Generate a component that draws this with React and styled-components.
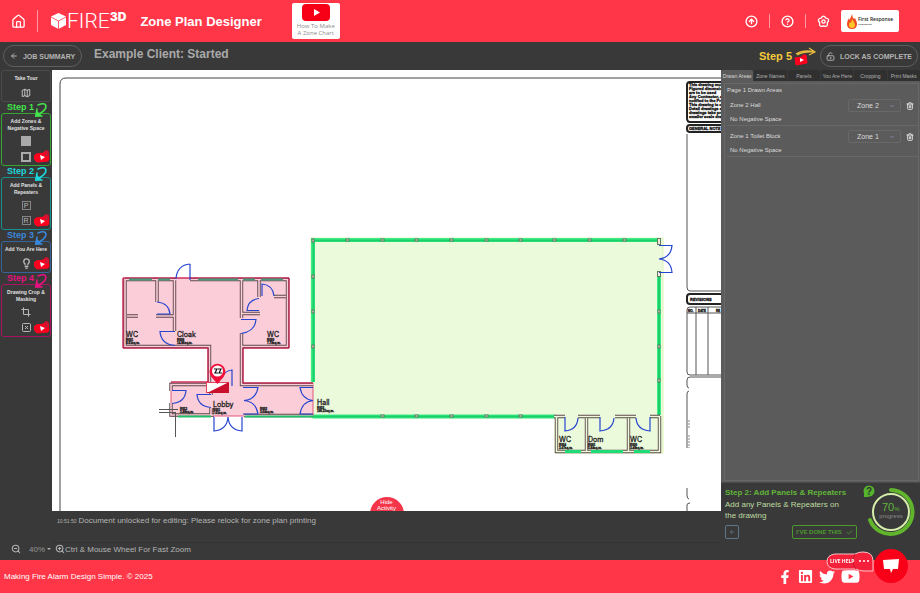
import React from "react";
import styled, { createGlobalStyle, css } from "styled-components";
import {
  House, CircleArrowUp, CircleHelp, ArrowLeft, Map as MapIcon, Crop, Check,
  ChevronDown, ZoomIn, ZoomOut, Lightbulb, Trash2, LockKeyholeOpen,
} from "lucide-react";
import { FaFacebookF, FaLinkedin, FaTwitter, FaYoutube } from "react-icons/fa";

const GlobalStyle = createGlobalStyle`
  *, *::before, *::after { box-sizing: border-box; }
  body { margin: 0; background: #393939; font-family: "Liberation Sans", Arial, sans-serif; }
  button, select { font: inherit; color: inherit; margin: 0; padding: 0; background: none; border: 0; cursor: pointer; }
  h1, h2, h3, p, ul { margin: 0; padding: 0; font-weight: inherit; font-size: inherit; }
  svg { display: block; flex: none; }
`;

const Page = styled.div`
  height: 100vh;
  display: flex;
  flex-direction: column;
  color: #b4b4b4;
`;

/* Header */
const Header = styled.header`
  flex: none;
  display: flex;
  align-items: center;
  height: 42px;
  padding: 0 21px 0 11px;
  background: #ff3648;
  color: #fff;
`;
const IconButton = styled.button`
  display: flex;
  align-items: center;
  justify-content: center;
`;
const Separator = styled.span`
  width: 1px;
  height: 14px;
  background: #ff9ba4;
`;
const BrandSeparator = styled(Separator)`
  height: 22px;
  margin-left: 11px;
`;
const Brand = styled.div`
  display: flex;
  align-items: center;
  margin-left: 12px;
  font: 300 21px/22px Roboto, sans-serif;
`;
const BrandSup = styled.span`
  align-self: flex-start;
  font: 900 12px/14px Inter, sans-serif;
`;
const AppTitle = styled.h1`
  margin-left: 14px;
  font-size: 13px;
  font-weight: 700;
`;
const HowTo = styled.button`
  display: flex;
  flex-direction: column;
  align-items: center;
  width: 48px;
  height: 36px;
  margin-left: 30px;
  padding-top: 1px;
  border-radius: 2px;
  background: #fff;
  color: #8b8b8b;
  font: 6px/7px "Open Sans", sans-serif;
  white-space: nowrap;
`;
const HeaderActions = styled.nav`
  display: flex;
  align-items: center;
  gap: 11px;
  margin-left: auto;
`;
const ClientLogo = styled.div`
  display: flex;
  align-items: center;
  justify-content: center;
  gap: 1px;
  width: 58px;
  height: 22px;
  border-radius: 2px;
  background: #fff;
  color: #222;
  font: 600 5px/7px "Open Sans", sans-serif;
  white-space: nowrap;
`;
const ClientTag = styled.span`
  display: block;
  font-size: 2px;
  line-height: 3px;
`;

/* Title bar */
const TitleBar = styled.div`
  flex: none;
  display: flex;
  align-items: center;
  height: 28px;
  padding: 0 2px 0 3px;
`;
const Pill = styled.button`
  display: flex;
  align-items: center;
  justify-content: center;
  gap: 5px;
  width: ${(p) => p.$width}px;
  height: 22px;
  border: 1px solid #5e5e5e;
  border-radius: 11px;
  color: #b4b4b4;
  font-size: 7px;
  font-weight: 700;
  white-space: nowrap;
`;
const JobTitle = styled.h2`
  margin-left: 12px;
  padding-bottom: 4px;
  font-size: 12px;
  font-weight: 700;
  color: #a9a9a9;
`;
const LockGroup = styled.div`
  display: flex;
  align-items: center;
  margin-left: auto;
`;
const StepFive = styled.div`
  display: flex;
  align-items: center;
  margin-right: 3px;
  color: #f4c93c;
  font-size: 11px;
  font-weight: 700;
`;

/* Work area */
const Work = styled.main`
  flex: 1;
  min-height: 0;
  display: grid;
  grid-template-columns: 52px minmax(0, 1fr) 199px;
  grid-template-rows: minmax(0, 1fr) 32px 17px;
  grid-template-areas: "tools canvas side" "tools log side" "zoom zoom side";
`;
const Tools = styled.nav`
  grid-area: tools;
  padding: 0 1px;
`;
const ToolBox = styled.section`
  display: flex;
  flex-direction: column;
  align-items: center;
  justify-content: space-between;
  height: ${(p) => p.$height}px;
  padding: 4px 0 2px;
  border: 1px solid ${(p) => p.$color};
  border-radius: 3px;
  color: #e0e0e0;
`;
const ToolTitle = styled.h3`
  font-size: 5px;
  line-height: 7px;
  font-weight: 700;
  text-align: center;
  white-space: nowrap;
`;
const ToolRow = styled.div`
  display: grid;
  grid-template-columns: 16px 16px 16px;
  justify-items: center;
  align-items: center;
  height: 13px;
  color: #b8b8b8;
`;
const ToolButton = styled(IconButton)`
  grid-column: 2;
`;
const Swatch = styled.span`
  width: 10px;
  height: 10px;
  ${(p) => (p.$filled ? css`background: #a9a9a9;` : css`border: 2px solid #a9a9a9;`)}
`;
const LetterBox = styled.span`
  width: 9px;
  height: 9px;
  border: 1px solid #858585;
  font-size: 7px;
  line-height: 7px;
  text-align: center;
`;
const StepLabel = styled.div`
  display: flex;
  align-items: center;
  gap: 1px;
  height: 11px;
  padding-left: 6px;
  color: ${(p) => p.$color};
  font-size: 9px;
  line-height: 11px;
  font-weight: 700;
  white-space: nowrap;
`;
const ArrowSvg = styled.svg`
  align-self: flex-start;
  overflow: visible;
`;

const Canvas = styled.section`
  grid-area: canvas;
  position: relative;
  overflow: hidden;
  background: #fff;
`;
const Plan = styled.svg`
  width: 100%;
  height: 100%;
`;
const HideActivity = styled.button`
  position: absolute;
  left: 50%;
  bottom: -20px;
  display: flex;
  justify-content: center;
  width: 34px;
  height: 34px;
  padding-top: 2px;
  transform: translateX(-50%);
  border-radius: 50%;
  background: #f5364a;
  color: #fff;
  font-size: 6px;
  line-height: 6px;
`;
const Log = styled.section`
  grid-area: log;
  display: flex;
  align-items: baseline;
  gap: 2px;
  padding: 5px 5px 0;
  border-bottom: 1px solid #333;
  font-size: 8px;
  line-height: 10px;
`;
const LogTime = styled.time`
  font-size: 5px;
`;
const ZoomBar = styled.div`
  grid-area: zoom;
  display: flex;
  align-items: center;
  padding: 0 11px 5px;
  font-size: 8px;
`;
const ZoomLevel = styled.button`
  display: flex;
  align-items: center;
  gap: 2px;
  margin: 0 4px 0 8px;
  color: #969696;
`;
const Caret = styled.span`
  border: 2px solid transparent;
  border-top-color: #b4b4b4;
  border-bottom: 0;
`;

/* Side panel */
const Side = styled.aside`
  grid-area: side;
  display: flex;
  flex-direction: column;
  min-height: 0;
`;
const Tabs = styled.div`
  display: grid;
  grid-template-columns: repeat(6, 1fr);
  gap: 1px;
  height: 11px;
`;
const Tab = styled.button`
  border-radius: 2px 2px 0 0;
  background: ${(p) => (p.$active ? "#5b5b5b" : "#303030")};
  color: ${(p) => (p.$active ? "#d8d8d8" : "#b0b0b0")};
  font-size: 5px;
  white-space: nowrap;
`;
const SideBody = styled.div`
  flex: 1;
  min-height: 0;
  padding: 2px 1px 1px 3px;
  background: #5b5b5b;
  color: #dcdcdc;
  font-size: 6px;
`;
const AreaBox = styled.section`
  height: 100%;
  border: 1px solid #686868;
  padding-left: 2px;
`;
const AreaTitle = styled.h3`
  padding-top: 1px;
  line-height: 10px;
`;
const AreaRow = styled.div`
  display: grid;
  grid-template-columns: 1fr 53px 17px;
  align-items: center;
  height: 31px;
  padding: 4px 0 0 3px;
  border-bottom: 1px solid #686868;
`;
const AreaName = styled.label`
  line-height: 13px;
`;
const SelectWrap = styled.span`
  display: grid;
  grid-template-columns: 1fr 11px;
  align-items: center;
  height: 13px;
  border: 1px solid #686868;
  border-radius: 2px;
`;
const ZoneSelect = styled.select`
  appearance: none;
  grid-area: 1 / 1 / 2 / 3;
  width: 100%;
  padding-left: 8px;
  font-size: 7px;
  line-height: 10px;
`;
const SelectIcon = styled(ChevronDown)`
  grid-area: 1 / 2;
  pointer-events: none;
  color: #8a93b4;
`;
const AreaNote = styled.p`
  grid-column: 1 / 4;
  line-height: 12px;
`;
const Guide = styled.section`
  flex: none;
  display: grid;
  grid-template-columns: 132px 1fr;
  gap: 3px;
  height: 78px;
  padding: 4px 4px 0 4px;
  border-top: 1px solid #4c4c4c;
  background: #393939;
`;
const GuideTitle = styled.h3`
  color: #62b53a;
  font-size: 8px;
  line-height: 12px;
  font-weight: 700;
  white-space: nowrap;
`;
const GuideText = styled.p`
  padding-right: 10px;
  color: #bddba0;
  font-size: 8px;
  line-height: 11px;
`;
const GuideButtons = styled.div`
  display: flex;
  justify-content: space-between;
  margin-top: 4px;
`;
const GuideButton = styled.button`
  display: flex;
  align-items: center;
  justify-content: center;
  gap: 4px;
  width: ${(p) => p.$width}px;
  height: 14px;
  border: 1px solid ${(p) => p.$color};
  border-radius: 2px;
  color: ${(p) => p.$color};
  font-size: 6px;
  font-weight: 700;
  white-space: nowrap;
`;
const ProgressArt = styled.svg`
  width: 60px;
  height: 60px;
  margin-top: -4px;
`;

/* Footer */
const Footer = styled.footer`
  flex: none;
  display: flex;
  align-items: center;
  justify-content: space-between;
  height: 33px;
  padding: 0 60px 0 4px;
  background: #ff3648;
  color: #fff;
  font-size: 8px;
`;
const Social = styled.nav`
  display: flex;
  align-items: center;
  gap: 6px;
`;
const SocialLink = styled.a`
  color: #fff;
`;
const Chat = styled.div`
  position: fixed;
  right: 12px;
  bottom: 10px;
  display: flex;
  align-items: flex-start;
`;
const LiveHelp = styled.button`
  display: flex;
  margin-top: 2px;
`;
const ChatButton = styled(IconButton)`
  width: 34px;
  height: 34px;
  border-radius: 50%;
  background: #f80018;
`;

function VideoBadge() {
  return (
    <svg width="16" height="13" viewBox="0 0 16 13" role="img" aria-label="Video">
      <path d="M2 4l8-1 1-2 3 0 1 8-1 2-11 1-2-2-1-4z" fill="#ff001f" strokeLinejoin="round" stroke="#ff001f" />
      <path d="M6 5l5 2-4 3z" fill="#fff" />
      <path d="M11 2q2-1 3 0l-1 1 1 1q-1 1-3 0M11 5l3 1" fill="none" stroke="#a72642" />
    </svg>
  );
}

function CurlArrow() {
  return (
    <ArrowSvg width="12" height="15" viewBox="0 0 12 15" fill="none" stroke="currentColor" strokeWidth="1.600" strokeLinecap="round" aria-hidden="true">
      <path d="M3 3q7-3 8 1 0 5-9 9M2 7l-1 7 6 0" />
      <path d="M2 10l-1 4 4-1z" fill="currentColor" />
    </ArrowSvg>
  );
}

function Step({ n, color }) {
  return (
    <StepLabel $color={color}>
      Step {n} <CurlArrow />
    </StepLabel>
  );
}

function RoomLabel({ x, y, name, lines }) {
  return (
    <g fill="#222">
      {name && (
        <text x={x} y={y} fontSize="7" fontFamily="Inter, sans-serif" stroke="#222" strokeWidth="0.300">{name}</text>
      )}
      {lines.map((line, i) => (
        <text key={line} x={x} y={y + 4 + i * 3} fontSize="3" fontWeight="700" stroke="#222" strokeWidth="0.300">{line}</text>
      ))}
    </g>
  );
}

const topPosts = [347, 382, 416, 451, 486, 520, 554, 589, 624];
const notes = [
  "This drawing must", "Figured dimensions", "are to be used", "Any Contractor, silv", "notified to the Proj",
  "This drawing is cop", "Detail drawings an", "drawings take pre", "smaller scale draw",
];

function Walls({ d, fill }) {
  return (
    <g fill="none">
      <path d={d} stroke="#5c474b" strokeWidth="3.400" />
      <path d={d} stroke={fill} strokeWidth="1.600" />
    </g>
  );
}

function FloorPlan() {
  return (
    <Plan viewBox="52 70 669 441" preserveAspectRatio="xMinYMin slice" role="img" aria-label="Zone plan drawing">
      <path d="M60 511V84q0-6 6-6H721" fill="none" stroke="#444" />

      {/* title block */}
      <g fill="none" stroke="#222">
        <path d="M721 82H690q-3 0-3 3v33q0 4 3 4h31M721 125H690q-3 0-3 3v1q0 3 3 3h31" strokeWidth="2" />
        <path d="M687 134v153q0 4 3 4h31" stroke="#555" />
        <path d="M721 294H690q-3 0-3 3v4q0 3 3 3h31" strokeWidth="2" />
        <path d="M721 307H690q-3 0-3 3v62q0 3 3 3h31M687 313h34M696 307v68M708 307v68M721 377H690q-3 0-3 3v5q0 3 2 3M689 391q-2 0-2 3v54M687 488v7q0 4 2 4M690 503q-3 0-3 2v6" stroke="#555" />
        <path d="M689 420v8M689 435v13" stroke="#888" strokeDasharray="2 1" />
      </g>
      <g fill="#111" fontSize="4" fontWeight="700" stroke="#111" strokeWidth="0.300">
        {notes.map((line, i) => <text key={line} x="689" y={86 + i * 4}>{line}</text>)}
        <text x="689" y="130">GENERAL NOTE</text>
        <text x="690" y="301">REVISIONS</text>
        <text x="688" y="312" fontSize="3">NO.</text>
        <text x="698" y="312" fontSize="3">DATE</text>
        <text x="716" y="312" fontSize="3">RE</text>
      </g>

      {/* hall */}
      <path d="M311 238H663V453H555V418H311Z" fill="#ecfadc" stroke="#dff5b5" />
      <g fill="none" stroke="#3fec89" strokeWidth="4">
        <path d="M312 240H658M313 238V382M659 277V415M313 416.500H555" />
      </g>
      <path d="M312 240.500H658M313.500 242V382M659 277V415M312 416.500H555" fill="none" stroke="#18cf68" strokeWidth="2" />
      <g fill="#f4e7dc" stroke="#5f7a60">
        {topPosts.map((x) => <rect key={x} x={x - 1} y="239" width="3" height="2" />)}
        {topPosts.slice(1, 6).map((x) => <rect key={x} x={x - 1} y="415" width="3" height="2" />)}
        {[276, 311, 346].map((y) => <rect key={y} x="312" y={y - 1} width="2" height="3" />)}
        {[311, 346, 380].map((y) => <rect key={y} x="658" y={y - 1} width="2" height="3" />)}
        <rect x="312" y="239" width="2" height="3" />
        <rect x="657.500" y="238.500" width="3" height="6" />
        <rect x="657.500" y="271.500" width="3" height="5" />
      </g>
      <Walls fill="#ecfadc" d="M554 416.500h11M578 416.500h22M615 416.500h21M650 416.500h10M556.500 416V451.500H659.500V416M586.500 418v33M628.500 418v33" />
      <path d="M565 451.500h16M591 451.500h32M634 451.500h16" stroke="#20dc76" strokeWidth="3" />

      {/* toilet block */}
      <path d="M123 278H289V348H243V383H313V416H171V382H208V348H123Z" fill="#fbcdd8" stroke="#e0567a" />
      <Walls fill="#fbcdd8" d="M125 279.500H176M190 279.500H287.500V346.500H241.500V384.500H313M125 279V346.500H209.500V384.500H171V391M157 280v22M156 316H175M127 316h11M174.500 280v51M241.500 280v38M241.500 333v14M259 280v17M242 313.500h18M274 296.500h12M211 384v11M211 408v8M171 403v12H214M244 415.500H313" />
      <path d="M123 278H289V348H243V383H313M208 382V348H123V278M171 382H208" fill="none" stroke="#cf1748" />
      <path d="M129 279.500h23M158 279.500h12M198 279.500h40M243 279.500h12M261 279.500h22" stroke="#4a9a7a" strokeWidth="2" />
      <path d="M178 416.500h33M245 416.500h68" stroke="#22c06c" strokeWidth="2" />
      <path d="M159 409.500h19M159 412.500h16M175.500 412v25" stroke="#555" fill="none" />

      {/* doors */}
      <g fill="none" stroke="#2545ce" strokeWidth="1.200">
        <path d="M190 264v16M190 264q-13 1-14 15" />
        <path d="M157 314h13q-1-11-13-12M175 331.500h-15q1 13 15 14" />
        <path d="M262 296v-12q11 1 12 12M259 310.500h-12q1-11 12-12M241 319.500h15q-1 12-15 14" />
        <path d="M232 386v-16q-8 1-10 8M172 390.500h14q-1 12-14 13M211 394.500h-14q1 12 14 13" />
        <path d="M243 387.500h15q-2 12-14 13q12 1 14 13.500h-15M313 387.500h-13q2 12 13 13q-11 1-13 13.500h13" />
        <path d="M214 417v14q13-1 14-14q1 13 14 14v-14" />
        <path d="M659 245.500h13q-1 12-13 13.500q12 1 13 13.500h-13" />
        <path d="M565 417v14q12-1 13-13M600 417v14q13-1 14-13M650 417v14q-13-1-14-13" />
      </g>

      <RoomLabel x={126} y={337} name="WC" lines={["R001", "8.01sq.m."]} />
      <RoomLabel x={177} y={337} name="Cloak" lines={["R008", "14.86sq.m."]} />
      <RoomLabel x={267} y={337} name="WC" lines={["R009", "7.78sq.m."]} />
      <RoomLabel x={213} y={407} name="Lobby" lines={["R001", "7.61sq.m."]} />
      <RoomLabel x={317} y={405} name="Hall" lines={["R003", "180.25sq.m."]} />
      <RoomLabel x={559} y={442} name="WC" lines={["R004", "3.47sq.m."]} />
      <RoomLabel x={588} y={442} name="Dom" lines={["R005", "5.84sq.m."]} />
      <RoomLabel x={630} y={442} name="WC" lines={["R006", "3.48sq.m."]} />
      <RoomLabel x={180} y={406} lines={["R012", "2.88sq.m."]} />
      <RoomLabel x={260} y={406} lines={["R002", "3.64sq.m."]} />

      {/* you are here */}
      <rect x="206.500" y="382.500" width="22" height="10" fill="#fff" stroke="#e0455c" />
      <path d="M229 382v11h-22z" fill="#c90f2b" />
      <path d="M217.500 384l-6-7a8 8 0 1 1 12 0z" fill="#f2113b" />
      <circle cx="217.500" cy="371" r="5.500" fill="#fff" />
      <path d="M214 369h3l-2 4h3M218 369h3l-2 4h3" fill="none" stroke="#111" strokeWidth="1.200" />
    </Plan>
  );
}

function AreaItem({ id, name, zone }) {
  return (
    <AreaRow>
      <AreaName htmlFor={id}>{name}</AreaName>
      <SelectWrap>
        <ZoneSelect id={id} defaultValue={zone}>
          <option>Zone 1</option>
          <option>Zone 2</option>
        </ZoneSelect>
        <SelectIcon size={6} strokeWidth={3} />
      </SelectWrap>
      <IconButton aria-label={`Delete ${name}`}><Trash2 size={8} strokeWidth={3} /></IconButton>
      <AreaNote>No Negative Space</AreaNote>
    </AreaRow>
  );
}

export default function App() {
  return (
    <Page>
      <GlobalStyle />
      <Header>
        <IconButton aria-label="Home"><House size={15} strokeWidth={2} /></IconButton>
        <BrandSeparator />
        <Brand>
          <svg width="17" height="18" viewBox="0 0 17 18" aria-hidden="true">
            <path d="M8.500 1L16 4.500V13l-7.500 4L1 13V4.500z" fill="#fff" />
            <path d="M1 5l7.500 4L16 5M8.500 9v8" fill="none" stroke="#ff3648" strokeWidth="0.800" />
          </svg>
          FIRE<BrandSup>3D</BrandSup>
        </Brand>
        <AppTitle>Zone Plan Designer</AppTitle>
        <HowTo>
          <svg width="28" height="19" viewBox="0 0 28 19" aria-hidden="true">
            <rect width="28" height="17" rx="4" fill="#f70017" />
            <path d="M12 5l6 3.500-6 3.500z" fill="#fff" />
          </svg>
          <span>How To Make<br />A Zone Chart</span>
        </HowTo>
        <HeaderActions>
          <IconButton aria-label="Upload"><CircleArrowUp size={13} strokeWidth={2.500} /></IconButton>
          <Separator />
          <IconButton aria-label="Help"><CircleHelp size={13} strokeWidth={2.500} /></IconButton>
          <Separator />
          <IconButton aria-label="Settings">
            <svg width="13" height="13" viewBox="0 0 24 24" fill="none" stroke="currentColor" strokeWidth="2.500" strokeLinejoin="round">
              <path d="M7.600 5.900Q12-2 16.400 5.900 25 7 19.100 14.300 20.500 23.500 12 20 3.500 23.500 4.900 14.300-1 7 7.600 5.900Z" />
              <circle cx="12" cy="12" r="3" />
            </svg>
          </IconButton>
          <ClientLogo>
            <svg width="10" height="15" viewBox="0 0 10 15" aria-hidden="true">
              <path d="M5 0q0 3 2 5l1-1q2 4 2 6 0 5-5 5T0 10q0-3 2-6v2q2-2 3-6z" fill="#f04a23" />
              <path d="M5 5q3 4 3 6 0 3-3 3t-3-3q0-2 1-3l1 1z" fill="#ffc526" />
            </svg>
            <span>First Response<ClientTag>Fire &amp; Security</ClientTag></span>
          </ClientLogo>
        </HeaderActions>
      </Header>

      <TitleBar>
        <Pill $width={79}><ArrowLeft size={8} strokeWidth={3} />JOB SUMMARY</Pill>
        <JobTitle>Example Client: Started</JobTitle>
        <LockGroup>
          <StepFive>
            Step 5
            <svg width="25" height="22" viewBox="-2 0 25 22" aria-hidden="true">
              <path d="M2 9q8-5 19-2M3 10q7-4 18-3M15 3l6 4-6 3" fill="none" stroke="#e5ba3c" strokeWidth="1.200" />
              <path d="M1 13l7-1 1-2 3 0 1 8-11 2z" fill="#ff001f" stroke="#ff001f" strokeLinejoin="round" />
              <path d="M6 13l4 2-4 2z" fill="#fff" />
            </svg>
          </StepFive>
          <Pill $width={98}><LockKeyholeOpen size={9} strokeWidth={2.500} />LOCK AS COMPLETE</Pill>
        </LockGroup>
      </TitleBar>

      <Work>
        <Tools aria-label="Drawing tools">
          <ToolBox $height={32} $color="#4b4b4b">
            <ToolTitle>Take Tour</ToolTitle>
            <ToolRow><ToolButton aria-label="Take tour"><MapIcon size={10} strokeWidth={2.500} /></ToolButton></ToolRow>
          </ToolBox>
          <Step n={1} color="#44e34b" />
          <ToolBox $height={53} $color="#35a634">
            <ToolTitle>Add Zones &amp;<br />Negative Space</ToolTitle>
            <ToolRow><ToolButton aria-label="Add zone"><Swatch $filled /></ToolButton></ToolRow>
            <ToolRow><ToolButton aria-label="Add negative space"><Swatch /></ToolButton><VideoBadge /></ToolRow>
          </ToolBox>
          <Step n={2} color="#1cd9dc" />
          <ToolBox $height={53} $color="#17918f">
            <ToolTitle>Add Panels &amp;<br />Repeaters</ToolTitle>
            <ToolRow><ToolButton aria-label="Add panel"><LetterBox>P</LetterBox></ToolButton></ToolRow>
            <ToolRow><ToolButton aria-label="Add repeater"><LetterBox>R</LetterBox></ToolButton><VideoBadge /></ToolRow>
          </ToolBox>
          <Step n={3} color="#3a88dc" />
          <ToolBox $height={32} $color="#34659c">
            <ToolTitle>Add You Are Here</ToolTitle>
            <ToolRow><ToolButton aria-label="Add you are here"><Lightbulb size={11} strokeWidth={3} /></ToolButton><VideoBadge /></ToolRow>
          </ToolBox>
          <Step n={4} color="#e5127f" />
          <ToolBox $height={53} $color="#a81462">
            <ToolTitle>Drawing Crop &amp;<br />Masking</ToolTitle>
            <ToolRow><ToolButton aria-label="Crop"><Crop size={10} strokeWidth={2.500} /></ToolButton></ToolRow>
            <ToolRow>
              <ToolButton aria-label="Mask">
                <svg width="9" height="9" viewBox="0 0 9 9" fill="none" stroke="currentColor">
                  <rect x="0.500" y="0.500" width="8" height="8" rx="1" />
                  <path d="M3 3l3 3M6 3l-3 3" />
                </svg>
              </ToolButton>
              <VideoBadge />
            </ToolRow>
          </ToolBox>
        </Tools>

        <Canvas>
          <FloorPlan />
          <HideActivity><span>Hide<br />Activity</span></HideActivity>
        </Canvas>

        <Log>
          <LogTime>10:51:50</LogTime>
          <p>Document unlocked for editing: Please relock for zone plan printing</p>
        </Log>

        <ZoomBar>
          <IconButton aria-label="Zoom out"><ZoomOut size={10} strokeWidth={2.500} /></IconButton>
          <ZoomLevel>40% <Caret /></ZoomLevel>
          <IconButton aria-label="Zoom in"><ZoomIn size={10} strokeWidth={2.500} /></IconButton>
          <span>Ctrl &amp; Mouse Wheel For Fast Zoom</span>
        </ZoomBar>

        <Side>
          <Tabs role="tablist">
            {["Drawn Areas", "Zone Names", "Panels", "You Are Here", "Cropping", "Print Masks"].map((label, i) => (
              <Tab key={label} role="tab" aria-selected={i === 0} $active={i === 0}>{label}</Tab>
            ))}
          </Tabs>
          <SideBody>
            <AreaBox>
              <AreaTitle>Page 1 Drawn Areas</AreaTitle>
              <AreaItem id="hall" name="Zone 2 Hall" zone="Zone 2" />
              <AreaItem id="toilets" name="Zone 1 Toilet Block" zone="Zone 1" />
            </AreaBox>
          </SideBody>
          <Guide>
            <div>
              <GuideTitle>Step 2: Add Panels &amp; Repeaters</GuideTitle>
              <GuideText>Add any Panels &amp; Repeaters on<br />the drawing</GuideText>
              <GuideButtons>
                <GuideButton $width={14} $color="#63758c" aria-label="Previous step"><ArrowLeft size={6} strokeWidth={3} /></GuideButton>
                <GuideButton $width={65} $color="#4c9a2e">I'VE DONE THIS <Check size={7} strokeWidth={3} /></GuideButton>
              </GuideButtons>
            </div>
            <ProgressArt viewBox="860 483 60 60" role="img" aria-label="70% progress">
              <path d="M864 491v6h5z" fill="#54b52c" />
              <circle cx="869" cy="491" r="5.500" fill="#54b52c" />
              <text x="869" y="495" textAnchor="middle" fontSize="10" fontWeight="700" fill="#333">?</text>
              <path d="M891 490a22 22 0 1 1-21 30" fill="none" stroke="#60b52c" strokeWidth="4" strokeLinecap="round" />
              <circle cx="891" cy="512" r="18" fill="none" stroke="#d5edaa" strokeWidth="2" />
              <text x="882" y="511" fontSize="11" fill="#62b53a">70<tspan fontSize="6">%</tspan></text>
              <text x="891" y="518" textAnchor="middle" fontSize="6" fill="#8c8c8c">progress</text>
            </ProgressArt>
          </Guide>
        </Side>
      </Work>

      <Footer>
        <span>Making Fire Alarm Design Simple. © 2025</span>
        <Social>
          <SocialLink href="#facebook" aria-label="Facebook"><FaFacebookF size={14} /></SocialLink>
          <SocialLink href="#linkedin" aria-label="LinkedIn"><FaLinkedin size={15} /></SocialLink>
          <SocialLink href="#twitter" aria-label="Twitter"><FaTwitter size={16} /></SocialLink>
          <SocialLink href="#youtube" aria-label="YouTube"><FaYoutube size={19} /></SocialLink>
        </Social>
      </Footer>

      <Chat>
        <LiveHelp>
          <svg width="48" height="21" viewBox="0 0 48 21" aria-hidden="true">
            <path d="M9 3h20Q32 1 37 1q10 0 10 9v10H38q-5 0-8-2H9Q1 17 1 10.500T9 3z" fill="#f5213a" stroke="#f9c3c8" />
            <path d="M29 3q-5 7 1 15" fill="none" stroke="#c81730" />
            <text x="4" y="12" fontSize="5" fontWeight="700" fontFamily="Open Sans, sans-serif" fill="#fff">LIVE HELP</text>
            <circle cx="34" cy="10" r="1" fill="#fff" /><circle cx="38" cy="10" r="1" fill="#fff" /><circle cx="42" cy="10" r="1" fill="#fff" />
          </svg>
        </LiveHelp>
        <ChatButton aria-label="Open chat">
          <svg width="16" height="14" viewBox="0 0 16 14" fill="#fff"><path d="M0 1l16-1-1 10-5 0-2 4-1-4-6 0z" /></svg>
        </ChatButton>
      </Chat>
    </Page>
  );
}
